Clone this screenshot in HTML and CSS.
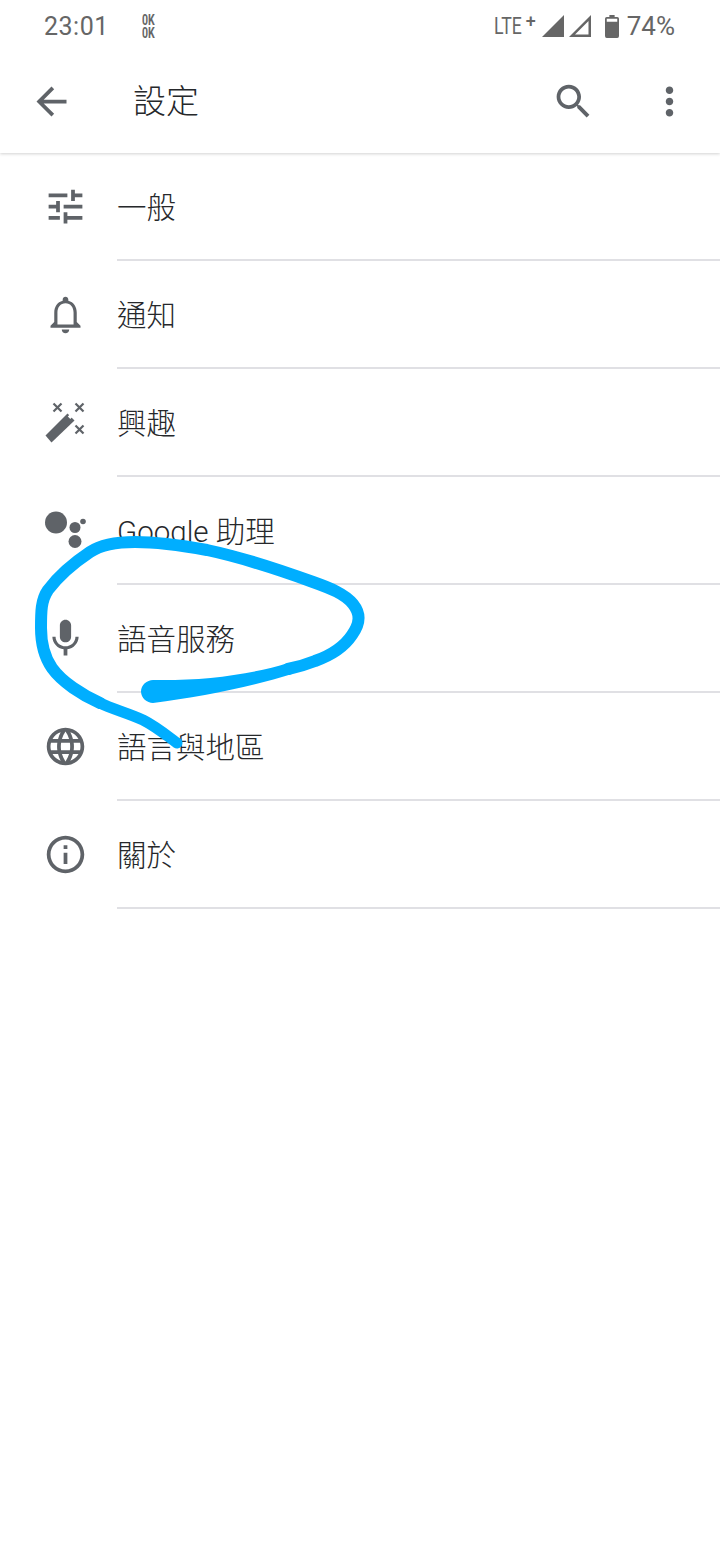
FILE: index.html
```html
<!DOCTYPE html>
<html lang="zh-Hant">
<head>
  <meta charset="UTF-8" />
  <meta name="viewport" content="width=device-width, initial-scale=1.0"/>
  <title>設定</title>
  <link rel="stylesheet" href="styles.css">
</head>
<body>
  <div class="page">
    <!-- status bar -->
    <div class="status">
      <span class="time">23:01</span>
      <span class="speed"><span>0K</span><span>0K</span></span>
      <span class="spacer"></span>
      <span class="lte"><span class="lte-text">LTE</span><span class="lte-plus">+</span></span>
      <svg class="sig" viewBox="0 0 24 24"><path d="M1 23 23 1v22z"/></svg>
      <svg class="sig sig2" viewBox="0 0 24 24"><path d="M1 23 23 1v22zM7 20.500h13.500V7z" fill-rule="evenodd"/></svg>
      <svg class="batt" viewBox="0 0 16 24" preserveAspectRatio="none"><path d="M5 0h6v2h3a2 2 0 0 1 2 2v18a2 2 0 0 1-2 2H2a2 2 0 0 1-2-2V4a2 2 0 0 1 2-2h3zM2 4v3h12V4z" fill-rule="evenodd"/></svg>
      <span class="pct">74%</span>
    </div>

    <!-- toolbar -->
    <div class="toolbar">
      <svg class="icon back" viewBox="0 0 24 24"><path d="M20 11H7.83l5.59-5.59L12 4l-8 8 8 8 1.41-1.41L7.83 13H20v-2z"/></svg>
      <span class="title">設定</span>
      <svg class="icon search" viewBox="0 0 24 24"><path d="M15.5 14h-.79l-.28-.27C15.41 12.59 16 11.11 16 9.5 16 5.91 13.09 3 9.5 3S3 5.91 3 9.5 5.91 16 9.5 16c1.61 0 3.09-.59 4.23-1.57l.27.28v.79l5 4.99L20.49 19l-4.99-5zm-6 0C7.01 14 5 11.99 5 9.5S7.01 5 9.5 5 14 7.01 14 9.5 11.99 14 9.5 14z"/></svg>
      <svg class="icon more" viewBox="0 0 24 24"><path d="M12 8c1.1 0 2-.9 2-2s-.9-2-2-2-2 .9-2 2 .9 2 2 2zm0 2c-1.1 0-2 .9-2 2s.9 2 2 2 2-.9 2-2-.9-2-2-2zm0 6c-1.1 0-2 .9-2 2s.9 2 2 2 2-.9 2-2-.9-2-2-2z"/></svg>
    </div>

    <!-- settings list -->
    <div class="list">
      <div class="row">
        <svg class="icon" viewBox="0 0 24 24"><path d="M3 17v2h6v-2H3zM3 5v2h10V5H3zm10 16v-2h8v-2h-8v-2h-2v6h2zM7 9v2H3v2h4v2h2V9H7zm14 4v-2H11v2h10zm-6-4h2V7h4V5h-4V3h-2v6z"/></svg>
        <div class="label">一般</div>
      </div>
      <div class="row">
        <svg class="icon" viewBox="0 0 24 24"><path fill-rule="evenodd" d="M12 22c1.1 0 2-.9 2-2h-4c0 1.100.9 2 2 2zM18 16v-5c0-3.070-1.630-5.640-4.500-6.320V4c0-.83-.67-1.500-1.500-1.500s-1.500.67-1.500 1.500v.68C7.640 5.360 6 7.920 6 11v5l-2 2v1h16v-1zM7.700 17.300v-6.300c0-2.800 1.600-5 4.300-5s4.300 2.200 4.300 5v6.300z"/></svg>
        <div class="label">通知</div>
      </div>
      <div class="row">
        <svg class="icon" viewBox="0 0 45 45">
          <g transform="translate(0 1)">
            <path d="M2.500 34.500 24.500 12.500 31.500 19.500 8.500 41.500z"/>
            <path class="notch" d="M24.800 15.500 27.500 12.800 30 15.300 27.300 18z"/>
            <path class="spark" d="M10.500 2.500l8 8M18.500 2.500l-8 8M32.500 2.500l8 8M40.500 2.500l-8 8M32.500 24.500l8 8M40.500 24.500l-8 8"/>
          </g>
        </svg>
        <div class="label">興趣</div>
      </div>
      <div class="row">
        <svg class="icon" viewBox="0 0 45 45">
          <circle cx="13" cy="14.500" r="11"/>
          <circle cx="32" cy="19.500" r="5.500"/>
          <circle cx="40" cy="13.500" r="2.800"/>
          <circle cx="32" cy="33.500" r="6.500"/>
        </svg>
        <div class="label">Google 助理</div>
      </div>
      <div class="row">
        <svg class="icon" viewBox="0 0 24 24"><path d="M12 14c1.660 0 2.990-1.340 2.990-3L15 5c0-1.660-1.340-3-3-3S9 3.340 9 5v6c0 1.660 1.340 3 3 3zm5.300-3c0 3-2.540 5.100-5.300 5.100S6.700 14 6.700 11H5c0 3.410 2.720 6.230 6 6.720V21h2v-3.280c3.280-.48 6-3.300 6-6.720h-1.700z"/></svg>
        <div class="label">語音服務</div>
      </div>
      <div class="row">
        <svg class="icon" viewBox="0 0 24 24"><path d="M11.990 2C6.470 2 2 6.480 2 12s4.470 10 9.990 10C17.520 22 22 17.520 22 12S17.520 2 11.990 2zm6.930 6h-2.950c-.32-1.250-.78-2.450-1.380-3.560 1.840.63 3.370 1.910 4.330 3.560zM12 4.040c.83 1.200 1.480 2.530 1.910 3.960h-3.820c.43-1.430 1.080-2.760 1.910-3.960zM4.260 14C4.100 13.360 4 12.690 4 12s.1-1.360.26-2h3.380c-.08.66-.14 1.320-.14 2 0 .68.06 1.340.14 2H4.260zm.82 2h2.950c.32 1.250.78 2.450 1.380 3.560-1.840-.63-3.370-1.900-4.330-3.560zm2.950-8H5.080c.96-1.660 2.490-2.930 4.330-3.560C8.810 5.550 8.350 6.750 8.030 8zM12 19.960c-.83-1.200-1.480-2.530-1.910-3.960h3.820c-.43 1.430-1.080 2.760-1.910 3.960zM14.340 14H9.660c-.09-.66-.16-1.320-.16-2 0-.68.07-1.350.16-2h4.680c.09.65.16 1.320.16 2 0 .68-.07 1.340-.16 2zm.25 5.560c.6-1.110 1.060-2.310 1.380-3.560h2.950c-.96 1.650-2.490 2.930-4.330 3.560zM16.360 14c.08-.66.14-1.320.14-2 0-.68-.06-1.340-.14-2h3.380c.16.64.26 1.310.26 2s-.1 1.360-.26 2h-3.380z"/></svg>
        <div class="label">語言與地區</div>
      </div>
      <div class="row">
        <svg class="icon" viewBox="0 0 24 24"><path d="M11 7h2v2h-2zm0 4h2v6h-2zm1-9C6.480 2 2 6.480 2 12s4.480 10 10 10 10-4.480 10-10S17.520 2 12 2zm0 18c-4.410 0-8-3.590-8-8s3.590-8 8-8 8 3.590 8 8-3.590 8-8 8z"/></svg>
        <div class="label">關於</div>
      </div>
    </div>

    <!-- hand drawn circle on top of the screenshot -->
    <svg class="scribble" viewBox="0 0 720 1562">
      <path class="ink ink-thin" d="M177 743C165 734 155 726 143 720C128 713 112 709 100 703"/>
      <path class="ink" d="M100 703C82 695 62 682 52 668C43 655 41 642 41 628C41 612 41 600 48 590C60 574 75 562 90 552C102 544 118 542 135 542C160 542 185 546 207 550C240 557 280 570 313 582C330 588 345 594 353 604C361 614 360 624 352 635C344 647 332 655 315 661C305 665 298 667 288 669"/>
      <path class="ink-end" d="M288 663C250 675 200 681 153 680C147 680 141 685 141 691.500C141 698 147 703 153 703C200 697 250 687 292 674z"/>
    </svg>
  </div>
</body>
</html>
```

FILE: styles.css
```css
* {
  box-sizing: border-box;
}
body {
  margin: 0;
  background: #fff;
  font-family: Roboto, "Noto Sans CJK TC", sans-serif;
}
.page {
  position: relative;
  width: 720px;
  height: 1562px;
  overflow: hidden;
  background: #fff;
}

/* status bar */
.status {
  display: flex;
  align-items: center;
  height: 50px;
  padding: 2px 45px 0 44px;
  color: #666;
}
.time {
  font-size: 25px;
  letter-spacing: 0.5px;
}
.speed {
  display: flex;
  flex-direction: column;
  margin-top: 2px;
  margin-left: 33px;
  font-size: 14px;
  font-weight: 700;
  line-height: 13px;
  transform: scaleX(0.75);
  transform-origin: left;
}
.spacer {
  flex: 1;
}
.lte {
  display: flex;
  width: 43px;
  font-size: 23px;
  white-space: nowrap;
}
.lte-text {
  width: 32px;
  transform: scaleX(0.77);
  transform-origin: left;
}
.lte-plus {
  margin-top: -3px;
  font-size: 18px;
  font-weight: 500;
}
.sig {
  width: 24px;
  height: 24px;
  margin-left: 4px;
  fill: #666;
}
.sig2 {
  margin-left: 3px;
}
.batt {
  width: 14px;
  height: 23px;
  margin-left: 13px;
  fill: #666;
}
.pct {
  margin-left: 8px;
  font-size: 26px;
}

/* toolbar */
.toolbar {
  position: relative;
  display: flex;
  align-items: center;
  height: 103px;
  box-shadow: 0 1px 3px rgba(0,0,0,0.18);
  clip-path: inset(0 0 -10px 0);
}
.icon {
  flex: none;
  width: 45px;
  height: 45px;
  fill: #5f6368;
}
.back {
  margin-left: 29px;
}
.title {
  margin-left: 59px;
  margin-bottom: 6px;
  font-size: 33px;
  font-weight: 300;
  color: #26282b;
}
.search {
  margin-left: auto;
}
.more {
  margin-left: 51px;
  margin-right: 28px;
}

/* list */
.row {
  display: flex;
  align-items: center;
  height: 108px;
  padding-left: 43px;
  padding-bottom: 2px;
}
.label {
  display: flex;
  align-items: center;
  align-self: stretch;
  flex: 1;
  margin-left: 29px;
  padding-bottom: 2px;
  margin-bottom: -2px;
  border-bottom: 2px solid #e0e0e4;
  font-size: 29.500px;
  font-weight: 300;
  color: #26282b;
}
.notch {
  fill: #fff;
}
.spark {
  fill: none;
  stroke: #5f6368;
  stroke-width: 2.200;
}

/* scribble */
.scribble {
  position: absolute;
  top: 0;
  left: 0;
  width: 720px;
  height: 1562px;
  pointer-events: none;
}
.ink {
  fill: none;
  stroke: #00aeff;
  stroke-width: 12;
  stroke-linecap: round;
}
.ink-thin {
  stroke-width: 11;
}
.ink-end {
  fill: #00aeff;
}
```
